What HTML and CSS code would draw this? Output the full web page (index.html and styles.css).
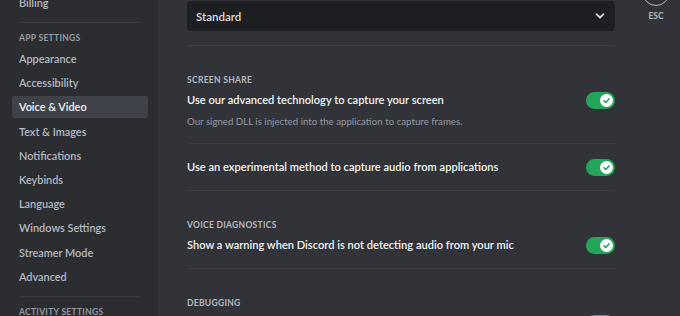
FILE: index.html
```html
<!DOCTYPE html>
<html>
<head>
  <meta charset="utf-8">
  <link rel="stylesheet" href="styles.css">
</head>
<body>
  <div class="app">
    <div class="sidebar">
      <div class="side-inner">
        <div class="side-item">Billing</div>
        <div class="side-sep"></div>
        <div class="side-header">App Settings</div>
        <div class="side-item">Appearance</div>
        <div class="side-item">Accessibility</div>
        <div class="side-item selected">Voice &amp; Video</div>
        <div class="side-item">Text &amp; Images</div>
        <div class="side-item">Notifications</div>
        <div class="side-item">Keybinds</div>
        <div class="side-item">Language</div>
        <div class="side-item">Windows Settings</div>
        <div class="side-item">Streamer Mode</div>
        <div class="side-item">Advanced</div>
        <div class="side-sep"></div>
        <div class="side-header">Activity Settings</div>
      </div>
    </div>

    <div class="main">
      <div class="content">
        <div class="select-wrap">
          <div class="select">
            <span>Standard</span>
            <svg class="chevron" width="12" height="12" viewBox="0 0 12 12">
              <path d="M2.5 4.2 L6 7.7 L9.5 4.2" fill="none" stroke="#dbdee1" stroke-width="1.8" stroke-linecap="round" stroke-linejoin="round"/>
            </svg>
          </div>
        </div>

        <div class="section">
          <div class="section-title">Screen Share</div>
          <div class="setting first">
            <div class="row">
              <div class="setting-title">Use our advanced technology to capture your screen</div>
              <div class="toggle on"><span class="knob"><svg width="9" height="9" viewBox="0 0 10 10"><path d="M2.2 5.2 L4.2 7.1 L7.9 3" fill="none" stroke="#23a55a" stroke-width="1.7" stroke-linecap="round" stroke-linejoin="round"/></svg></span></div>
            </div>
            <div class="setting-desc">Our signed DLL is injected into the application to capture frames.</div>
          </div>
          <div class="setting">
            <div class="row">
              <div class="setting-title">Use an experimental method to capture audio from applications</div>
              <div class="toggle on"><span class="knob"><svg width="9" height="9" viewBox="0 0 10 10"><path d="M2.2 5.2 L4.2 7.1 L7.9 3" fill="none" stroke="#23a55a" stroke-width="1.7" stroke-linecap="round" stroke-linejoin="round"/></svg></span></div>
            </div>
          </div>
        </div>

        <div class="section">
          <div class="section-title">Voice Diagnostics</div>
          <div class="setting first">
            <div class="row">
              <div class="setting-title">Show a warning when Discord is not detecting audio from your mic</div>
              <div class="toggle on"><span class="knob"><svg width="9" height="9" viewBox="0 0 10 10"><path d="M2.2 5.2 L4.2 7.1 L7.9 3" fill="none" stroke="#23a55a" stroke-width="1.7" stroke-linecap="round" stroke-linejoin="round"/></svg></span></div>
            </div>
          </div>
        </div>

        <div class="section">
          <div class="section-title">Debugging</div>
          <div class="setting first">
            <div class="row">
              <div class="setting-title">Debug logging for audio subsystem</div>
              <div class="toggle off"><span class="knob"></span></div>
            </div>
          </div>
        </div>
      </div>

      <div class="tools">
        <div class="esc-circle"></div>
        <div class="esc-label">ESC</div>
      </div>
    </div>
  </div>
</body>
</html>
```

FILE: styles.css
```css
body {
  margin: 0;
  background: #313338;
  font-family: Lato, "Noto Sans", Arial, sans-serif;
  overflow: hidden;
}
.app {
  display: flex;
  height: 316px;
  overflow: hidden;
}
.sidebar {
  width: 158px;
  flex-shrink: 0;
  background: #2b2d31;
  overflow: hidden;
}
.side-inner {
  margin-top: -8px;
  padding: 0 10px 0 12px;
}
.side-item {
  height: 22px;
  line-height: 22px;
  margin-bottom: 2.2px;
  padding: 0 7px;
  border-radius: 3px;
  font-size: 10.9px;
  font-weight: 600;
  color: #b5bac1;
  white-space: nowrap;
}
.side-item.selected {
  background: #404249;
  color: #f2f3f5;
}
.side-sep {
  height: 1px;
  background: #3a3c42;
  margin: 8px 7px 9px;
}
.side-header {
  height: 12px;
  line-height: 12px;
  margin-bottom: 4px;
  padding: 0 7px;
  font-size: 8.5px;
  font-weight: 700;
  letter-spacing: 0.3px;
  text-transform: uppercase;
  color: #949ba4;
}
.main {
  flex: 1;
  display: flex;
}
.content {
  width: 428px;
  margin-left: 29px;
  flex-shrink: 0;
}
.select-wrap {
  padding-top: 1px;
  padding-bottom: 14px;
  border-bottom: 1px solid #3b3d43;
}
.select {
  height: 30px;
  background: #1e1f22;
  border-radius: 3px;
  display: flex;
  align-items: center;
  justify-content: space-between;
  padding: 0 9px;
  font-size: 11.5px;
  font-weight: 600;
  color: #dbdee1;
}
.section {
  padding-top: 29px;
}
.section-title {
  height: 10px;
  line-height: 10px;
  margin-bottom: 7px;
  font-size: 8.5px;
  font-weight: 700;
  letter-spacing: 0.3px;
  text-transform: uppercase;
  color: #b5bac1;
}
.setting {
  padding: 15px 0 15px;
  border-bottom: 1px solid #3b3d43;
}
.setting.first {
  padding-top: 0;
}
.row {
  display: flex;
  align-items: center;
  justify-content: space-between;
  height: 16px;
}
.setting-title {
  font-size: 11.1px;
  font-weight: 600;
  line-height: 16px;
  color: #f2f3f5;
  white-space: nowrap;
}
.setting-desc {
  margin-top: 7px;
  font-size: 9.7px;
  line-height: 12px;
  color: #949ba4;
}
.setting.first:has(.setting-desc) {
  padding-bottom: 16px;
}
.toggle {
  width: 29px;
  height: 17px;
  border-radius: 9px;
  display: flex;
  align-items: center;
  padding: 0 2px;
  box-sizing: border-box;
}
.toggle.on {
  background: #23a55a;
  justify-content: flex-end;
}
.toggle.off {
  background: #80848e;
}
.knob {
  width: 13px;
  height: 13px;
  border-radius: 50%;
  background: #fff;
  display: flex;
  align-items: center;
  justify-content: center;
}
.tools {
  margin-left: 21px;
  width: 40px;
  display: flex;
  flex-direction: column;
  align-items: center;
}
.esc-circle {
  width: 28px;
  height: 28px;
  margin-top: -22px;
  border: 1.5px solid #b5bac1;
  border-radius: 50%;
  box-sizing: border-box;
}
.esc-label {
  margin-top: 5px;
  font-size: 8.5px;
  font-weight: 700;
  color: #b5bac1;
}
```
